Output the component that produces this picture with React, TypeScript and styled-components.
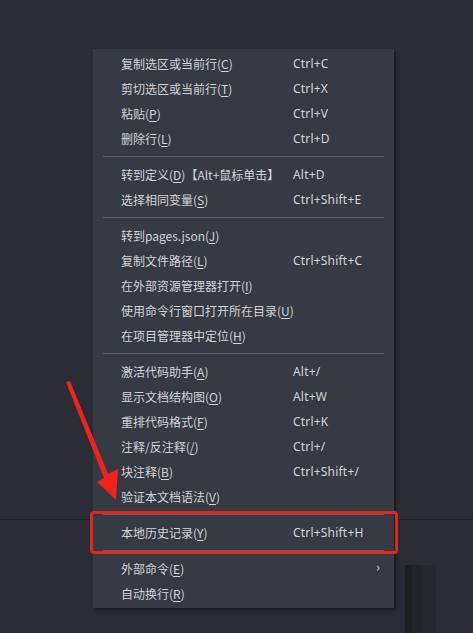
import React from 'react'
import styled, { createGlobalStyle } from 'styled-components'

const GlobalStyle = createGlobalStyle`
  html, body {
    margin: 0;
    padding: 0;
    background: #2a2d35;
  }
  body {
    font-family: "Noto Sans CJK SC", "Noto Sans", sans-serif;
  }
`

const Screen = styled.div`
  position: relative;
  width: 473px;
  height: 633px;
  overflow: hidden;
  display: flex;
  flex-direction: column;
  background: #2a2d35;
`
const EditorArea = styled.div`
  height: 519px;
  border-bottom: 1px solid #1d1f24;
`
const BottomPanel = styled.div`
  flex: 1;
  display: flex;
  justify-content: flex-end;
  padding-top: 45px;
  padding-right: 37px;
`
const ScrollStrip = styled.div`
  width: 31px;
  background: linear-gradient(to right, #1c1e22 0 7px, #212429 7px 17px, #25282e 17px);
`

const Menu = styled.div`
  position: absolute;
  left: 93px;
  top: 49px;
  width: 301px;
  padding: 2px 0;
  background: #363a42;
  box-shadow: 2px 2px 3px rgba(0, 0, 0, 0.45);
  color: #d2d4d8;
  font-size: 12px;
`
const Row = styled.div`
  height: 25px;
  display: grid;
  grid-template-columns: 172px 1fr 18px;
  align-items: center;
  padding-left: 28px;
  white-space: nowrap;
`
const Label = styled.span`
  u {
    text-underline-offset: 2px;
  }
`
const Shortcut = styled.span`
  font-family: "Noto Sans", "Noto Sans CJK SC", sans-serif;
  letter-spacing: 0.2px;
`
const Chevron = styled.span`
  font-size: 13px;
  color: #c8cacf;
  margin-top: -4px;
`
const Separator = styled.div`
  height: 11px;
  display: flex;
  align-items: center;
  padding: 0 10px;
  &::after {
    content: '';
    flex: 1;
    height: 1px;
    background: #5d6169;
  }
`
const Highlight = styled.div`
  position: absolute;
  left: 90px;
  top: 511px;
  width: 302px;
  height: 37px;
  border: 3px solid #e0261f;
  border-radius: 4px;
`
const Arrow = styled.svg`
  position: absolute;
  left: 0;
  top: 0;
`

type Item = { label: string; key?: string; shortcut?: string; sub?: boolean }

const groups: Item[][] = [
  [
    { label: '复制选区或当前行', key: 'C', shortcut: 'Ctrl+C' },
    { label: '剪切选区或当前行', key: 'T', shortcut: 'Ctrl+X' },
    { label: '粘贴', key: 'P', shortcut: 'Ctrl+V' },
    { label: '删除行', key: 'L', shortcut: 'Ctrl+D' },
  ],
  [
    { label: '转到定义', key: 'D', shortcut: 'Alt+D' },
    { label: '选择相同变量', key: 'S', shortcut: 'Ctrl+Shift+E' },
  ],
  [
    { label: '转到pages.json', key: 'J' },
    { label: '复制文件路径', key: 'L', shortcut: 'Ctrl+Shift+C' },
    { label: '在外部资源管理器打开', key: 'I' },
    { label: '使用命令行窗口打开所在目录', key: 'U' },
    { label: '在项目管理器中定位', key: 'H' },
  ],
  [
    { label: '激活代码助手', key: 'A', shortcut: 'Alt+/' },
    { label: '显示文档结构图', key: 'O', shortcut: 'Alt+W' },
    { label: '重排代码格式', key: 'F', shortcut: 'Ctrl+K' },
    { label: '注释/反注释', key: '/', shortcut: 'Ctrl+/' },
    { label: '块注释', key: 'B', shortcut: 'Ctrl+Shift+/' },
    { label: '验证本文档语法', key: 'V' },
  ],
  [{ label: '本地历史记录', key: 'Y', shortcut: 'Ctrl+Shift+H' }],
  [
    { label: '外部命令', key: 'E', sub: true },
    { label: '自动换行', key: 'R' },
  ],
]

function MenuRow({ item }: { item: Item }) {
  return (
    <Row>
      <Label>
        {item.label}(<u>{item.key}</u>){item.label === '转到定义' ? '【Alt+鼠标单击】' : ''}
      </Label>
      <Shortcut>{item.shortcut}</Shortcut>
      {item.sub ? <Chevron>›</Chevron> : <span />}
    </Row>
  )
}

export default function App() {
  return (
    <>
      <GlobalStyle />
      <Screen>
        <EditorArea />
        <BottomPanel>
          <ScrollStrip />
        </BottomPanel>
        <Menu>
          {groups.map((group, gi) => (
            <React.Fragment key={gi}>
              {gi > 0 && <Separator />}
              {group.map((item, i) => (
                <MenuRow key={i} item={item} />
              ))}
            </React.Fragment>
          ))}
        </Menu>
        <Highlight />
        <Arrow width="473" height="633" viewBox="0 0 473 633">
          <polygon points="66,382 70,381 108,474 118,469 116,500 97,482 104,478" fill="#f0231c" />
        </Arrow>
      </Screen>
    </>
  )
}
